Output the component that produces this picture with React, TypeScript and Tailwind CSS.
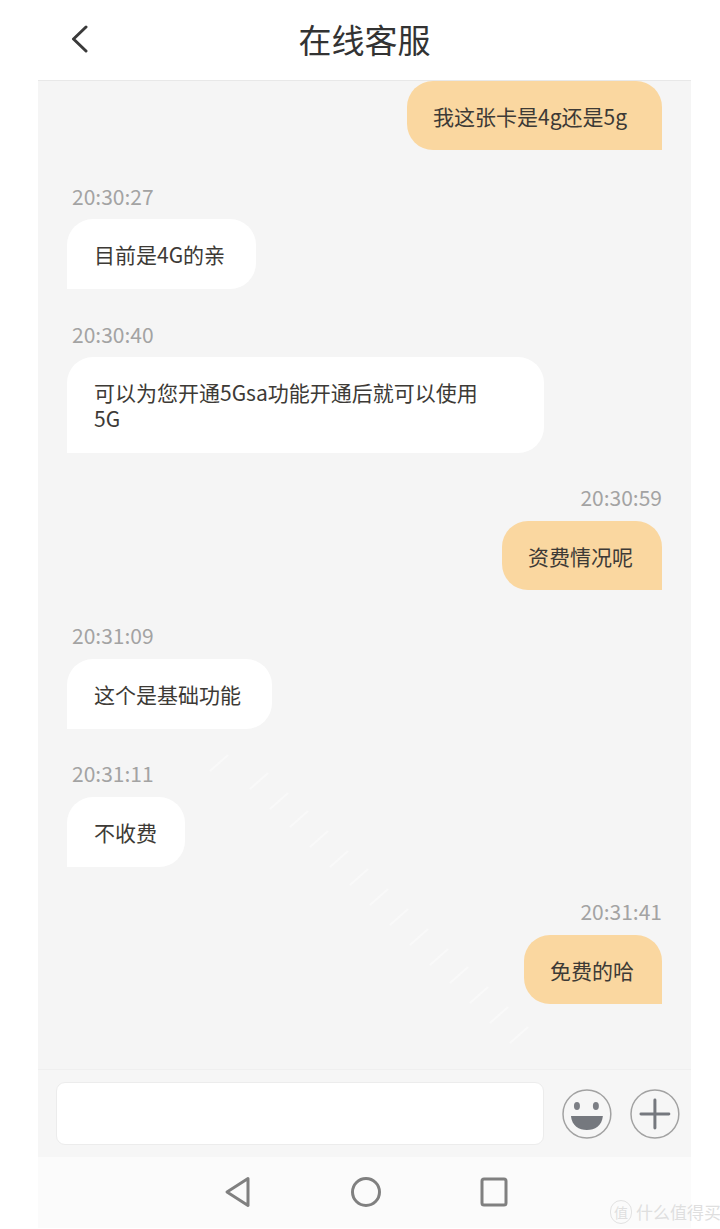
import React from "react";

const font = { fontFamily: '"Noto Sans CJK SC", "Noto Sans", sans-serif' };

function Time({ text, right, className }: { text: string; right?: boolean; className: string }) {
  return (
    <div className={`h-6 text-[21px] leading-6 text-[#a3a3a3] ${right ? "text-right" : "pl-[5px]"} ${className}`}>
      {text}
    </div>
  );
}

function Bubble({ right, className, children }: { right?: boolean; className: string; children: React.ReactNode }) {
  return (
    <div
      className={`flex items-center text-[21px] leading-[26px] text-[#3d3a36] ${
        right
          ? "self-end rounded-[26px] rounded-br-none bg-[#fad7a0] pl-[26px]"
          : "self-start rounded-[26px] rounded-bl-none bg-white pl-[27px]"
      } ${className}`}
    >
      <span className="whitespace-nowrap">{children}</span>
    </div>
  );
}

export default function App() {
  return (
    <div className="relative h-[1229px] w-[720px] overflow-hidden bg-white" style={font}>
      <div className="ml-[38px] flex h-[1228px] w-[653px] flex-col">
        <header className="relative flex h-[81px] shrink-0 items-center justify-center border-b border-[#e8e8e8] pb-[2px]">
          <svg className="absolute left-[32px] top-[25px]" width="20" height="28" viewBox="0 0 20 28" fill="none">
            <path d="M16 2 L3.5 14 L16 26" stroke="#3a3a3a" strokeWidth="3" strokeLinecap="round" strokeLinejoin="round" />
          </svg>
          <h1 className="text-[33px] font-normal leading-[40px] text-[#333333]">在线客服</h1>
        </header>

        <main className="relative flex flex-1 flex-col overflow-hidden bg-[#f5f5f5] pl-[29px] pr-[29px]">
          <svg className="absolute left-0 top-0" width="653" height="988" fill="none" stroke="#f9f9f9" strokeWidth="2">
            <path d="M172 690l18-16M212 708l18-16M232 728l18-16M252 746l18-16M272 766l18-16M292 786l18-16M312 804l18-16M332 824l18-16M352 844l18-16M372 864l18-16M392 884l18-16M412 902l18-16M432 922l18-16M452 942l18-16M472 962l18-16" />
          </svg>
          <Bubble right className="relative h-[69px] w-[255px]">我这张卡是4g还是5g</Bubble>

          <Time text="20:30:27" className="relative mt-[34px]" />
          <Bubble className="relative mt-[11px] h-[70px] w-[189px]">目前是4G的亲</Bubble>

          <Time text="20:30:40" className="relative mt-[33px]" />
          <Bubble className="relative mt-[11px] h-[96px] w-[477px]">
            可以为您开通5Gsa功能开通后就可以使用
            <br />
            5G
          </Bubble>

          <Time text="20:30:59" right className="relative mt-[32px]" />
          <Bubble right className="relative mt-[12px] h-[69px] w-[160px] pl-[25px]">资费情况呢</Bubble>

          <Time text="20:31:09" className="relative mt-[33px]" />
          <Bubble className="relative mt-[12px] h-[70px] w-[205px]">这个是基础功能</Bubble>

          <Time text="20:31:11" className="relative mt-[32px]" />
          <Bubble className="relative mt-[12px] h-[70px] w-[118px]">不收费</Bubble>

          <Time text="20:31:41" right className="relative mt-[32px]" />
          <Bubble right className="relative mt-[12px] h-[69px] w-[138px]">免费的哈</Bubble>
        </main>

        <div className="flex h-[88px] shrink-0 items-center border-t border-[#efefef] bg-[#f6f6f6] pl-[18px] pr-[11px]">
          <div className="h-[63px] w-[490px] rounded-[9px] border border-[#ececec] bg-white" />
          <svg className="ml-[18px]" width="50" height="50" viewBox="0 0 50 50" fill="none">
            <circle cx="25" cy="25" r="24" stroke="#a2a2a2" strokeWidth="1.5" />
            <ellipse cx="15" cy="17" rx="3" ry="4" fill="#7c7f85" />
            <ellipse cx="34" cy="17" rx="3" ry="4" fill="#7c7f85" />
            <path d="M9 27 H41 C40 37 33 41 25 41 C17 41 10 37 9 27 Z" fill="#75787e" />
          </svg>
          <svg className="ml-[18px]" width="50" height="50" viewBox="0 0 50 50" fill="none">
            <circle cx="25" cy="25" r="24" stroke="#a2a2a2" strokeWidth="1.5" />
            <path d="M25 11 V39 M11 25 H39" stroke="#75787e" strokeWidth="3" strokeLinecap="round" />
          </svg>
        </div>

        <nav className="flex h-[71px] shrink-0 items-center justify-center gap-[99px] bg-[#fbfbfb] pb-[2px] pl-[2px]">
          <svg width="28" height="32" viewBox="0 0 28 32" fill="none">
            <path d="M24 2.5 L3 16 L24 29.5 Z" stroke="#808080" strokeWidth="3" strokeLinejoin="round" />
          </svg>
          <svg width="30" height="30" viewBox="0 0 30 30" fill="none">
            <circle cx="15" cy="15" r="13.5" stroke="#808080" strokeWidth="3" />
          </svg>
          <svg width="28" height="30" viewBox="0 0 28 30" fill="none">
            <rect x="2" y="2" width="24" height="26" rx="2" stroke="#808080" strokeWidth="3" />
          </svg>
        </nav>
      </div>

      <div className="absolute left-[610px] top-[1199px] flex items-center gap-[4px] text-[17px] leading-[26px] text-[#dfdfdf]">
        <span className="flex h-[24px] w-[22px] items-center justify-center rounded-full border border-[#e2e2e2] text-[14px] leading-none">值</span>
        <span className="whitespace-nowrap">什么值得买</span>
      </div>
    </div>
  );
}
